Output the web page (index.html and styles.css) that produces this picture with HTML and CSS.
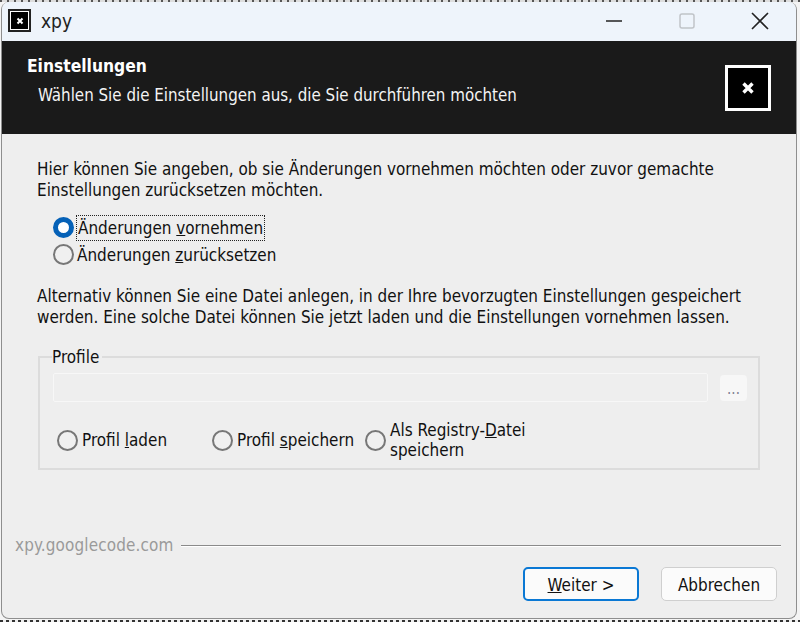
FILE: index.html
```html
<!DOCTYPE html>
<html lang="de">
<head>
<meta charset="utf-8">
<title>xpy</title>
<link rel="stylesheet" href="styles.css">
</head>
<body>
<div class="window">
  <div class="titlebar">
    <div class="app-icon"><svg width="12" height="12" viewBox="0 0 12 12"><path d="M3.5 3.5l5 5M8.5 3.5l-5 5" stroke="#fff" stroke-width="2"/></svg></div>
    <div class="app-name">xpy</div>
    <div class="controls">
      <svg class="ctl" width="18" height="18" viewBox="0 0 18 18"><path d="M1 9h16" stroke="#222" stroke-width="1.5"/></svg>
      <svg class="ctl ctl-max" width="18" height="18" viewBox="0 0 18 18"><rect x="2" y="2" width="14" height="14" rx="2" fill="none" stroke="#c0c4c8" stroke-width="1.5"/></svg>
      <svg class="ctl ctl-close" width="18" height="18" viewBox="0 0 18 18"><path d="M1 1l16 16M17 1L1 17" stroke="#222" stroke-width="1.6"/></svg>
    </div>
  </div>
  <div class="banner">
    <div class="banner-text">
      <div class="banner-title">Einstellungen</div>
      <div class="banner-sub">Wählen Sie die Einstellungen aus, die Sie durchführen möchten</div>
    </div>
    <div class="banner-logo"><svg width="14" height="14" viewBox="0 0 14 14"><path d="M2.5 2.5l9 9M11.5 2.5l-9 9" stroke="#fff" stroke-width="3.4"/></svg></div>
  </div>
  <div class="content">
    <p class="para para-first">Hier können Sie angeben, ob sie Änderungen vornehmen möchten oder zuvor gemachte Einstellungen zurücksetzen möchten.</p>
    <div class="options">
      <div class="radio-row"><span class="radio radio-on"></span><span class="focus">Änderungen <u>v</u>ornehmen</span></div>
      <div class="radio-row"><span class="radio"></span><span class="plain">Änderungen <u>z</u>urücksetzen</span></div>
    </div>
    <p class="para para-second">Alternativ können Sie eine Datei anlegen, in der Ihre bevorzugten Einstellungen gespeichert werden. Eine solche Datei können Sie jetzt laden und die Einstellungen vornehmen lassen.</p>
    <fieldset class="profile">
      <legend class="profile-legend">Profile</legend>
      <div class="file-row">
        <div class="file-input"></div>
        <div class="file-btn">...</div>
      </div>
      <div class="profile-opts">
        <div class="popt popt-load"><span class="radio"></span><span>Profil <u>l</u>aden</span></div>
        <div class="popt popt-save"><span class="radio"></span><span>Profil <u>s</u>peichern</span></div>
        <div class="popt popt-reg"><span class="radio"></span><span class="wrap">Als Registry-<u>D</u>atei speichern</span></div>
      </div>
    </fieldset>
    <div class="brand-row">
      <span class="brand">xpy.googlecode.com</span>
      <span class="brand-line"></span>
    </div>
    <div class="buttons">
      <div class="btn btn-primary"><span><u>W</u>eiter &gt;</span></div>
      <div class="btn">Abbrechen</div>
    </div>
  </div>
</div>
</body>
</html>
```
FILE: styles.css
```css
* { box-sizing: border-box; }
html, body { margin: 0; height: 100%; }
body {
  width: 800px;
  height: 622px;
  overflow: hidden;
  padding: 2px 3px 3px 1px;
  background-color: #f4f4f4;
  background-image:
    repeating-linear-gradient(90deg, #333 0 3px, #eee 3px 6px),
    repeating-linear-gradient(90deg, #555 0 2px, #ddd 2px 7px);
  background-size: 100% 2px, 100% 2px;
  background-position: 0 100%, 0 0;
  background-repeat: no-repeat;
  font-family: "DejaVu Sans Condensed", "DejaVu Sans", sans-serif;
  font-stretch: condensed;
  font-size: 16.95px;
  color: #111;
}
.window {
  height: 617px;
  display: flex;
  flex-direction: column;
  border-radius: 8px;
  border: 1px solid #8e8e8e;
  border-top: 0;
  overflow: hidden;
  background: #eeeeee;
}
.titlebar {
  height: 39px;
  flex: none;
  display: flex;
  align-items: center;
  background: #eef4fb;
  padding: 0 0 2px 6px;
}
.app-icon {
  width: 23px;
  height: 23px;
  background: #000;
  border: 2px solid #222;
  outline: 1px solid #fff;
  outline-offset: -3px;
  display: flex;
  align-items: center;
  justify-content: center;
}
.app-name { margin-left: 10px; font-size: 19px; color: #222; }
.controls { margin-left: auto; display: flex; gap: 55px; padding-right: 27px; }
.ctl { display: block; }
.banner {
  height: 93px;
  flex: none;
  background: #1a1a1a;
  display: flex;
  justify-content: space-between;
  padding: 14px 25px 0 25px;
  color: #fff;
}
.banner-title { font-size: 17.3px; font-weight: 700; line-height: 22px; }
.banner-sub { font-size: 16.8px; line-height: 22px; margin: 7px 0 0 11px; color: #f4f4f4; }
.banner-logo {
  width: 46px;
  height: 46px;
  margin-top: 10px;
  background: #000;
  border: 3px solid #fff;
  display: flex;
  align-items: center;
  justify-content: center;
}
.content { flex: 1; padding: 25px 15px 0 35px; display: flex; flex-direction: column; }
.para { margin: 0; font-size: 16.95px; line-height: 21px; width: 722px; }
.options { margin: 13px 0 0 16px; }
.radio-row { display: flex; align-items: center; height: 27px; }
.radio {
  width: 21px;
  height: 21px;
  flex: none;
  border-radius: 50%;
  border: 2px solid #777;
  background: #f0f0f0;
  margin-right: 3px;
}
.radio-on { border: 5px solid #0561b7; background: #fff; }
.focus { outline: 1px dotted #222; line-height: 24px; padding: 0 1px; }
.para-second { margin-top: 18px; }
.profile {
  margin: 18px 0 0 1px;
  padding: 0 11px 0 13px;
  width: 722px;
  height: 124px;
  border: 2px solid #dcdcdc;
  min-width: 0;
}
.profile-legend { padding: 0 3px 0 0; margin-left: -1px; line-height: 22px; font-size: 16.95px; }
.file-row { display: flex; justify-content: space-between; margin-top: 5px; }
.file-input { width: 655px; height: 29px; border: 1px solid #f7f7f7; border-radius: 2px; background: #eeeeee; }
.file-btn {
  width: 27px;
  height: 26px;
  margin-top: 2px;
  border-radius: 4px;
  background: #f7f7f7;
  color: #7f7f92;
  font-size: 15px;
  line-height: 28px;
  text-align: center;
}
.profile-opts { display: flex; align-items: center; margin-top: 18px; padding-left: 4px; height: 40px; }
.popt { display: flex; align-items: center; }
.popt-load { width: 155px; }
.popt-save { width: 153px; }
.popt-reg { width: 170px; }
.wrap { line-height: 20px; }
.popt .radio { margin-right: 4px; }
.brand-row { display: flex; align-items: center; margin: 65px 0 0 -22px; }
.brand { font-size: 16.95px; letter-spacing: .15px; color: #9a9a9a; line-height: 20px; }
.brand-line { flex: 1; height: 1px; margin-left: 7px; border-top: 1px solid #8a8a8a; box-shadow: 0 1px 0 #fff; }
.buttons { display: flex; justify-content: flex-end; gap: 22px; margin-top: 12px; padding-right: 4px; }
.btn {
  width: 116px;
  height: 34px;
  padding-top: 2px;
  border: 1px solid #cfcfcf;
  border-radius: 5px;
  background: #fbfbfb;
  display: flex;
  align-items: center;
  justify-content: center;
  font-size: 16.95px;
}
.btn-primary { border: 2px solid #0a78d4; }
```
